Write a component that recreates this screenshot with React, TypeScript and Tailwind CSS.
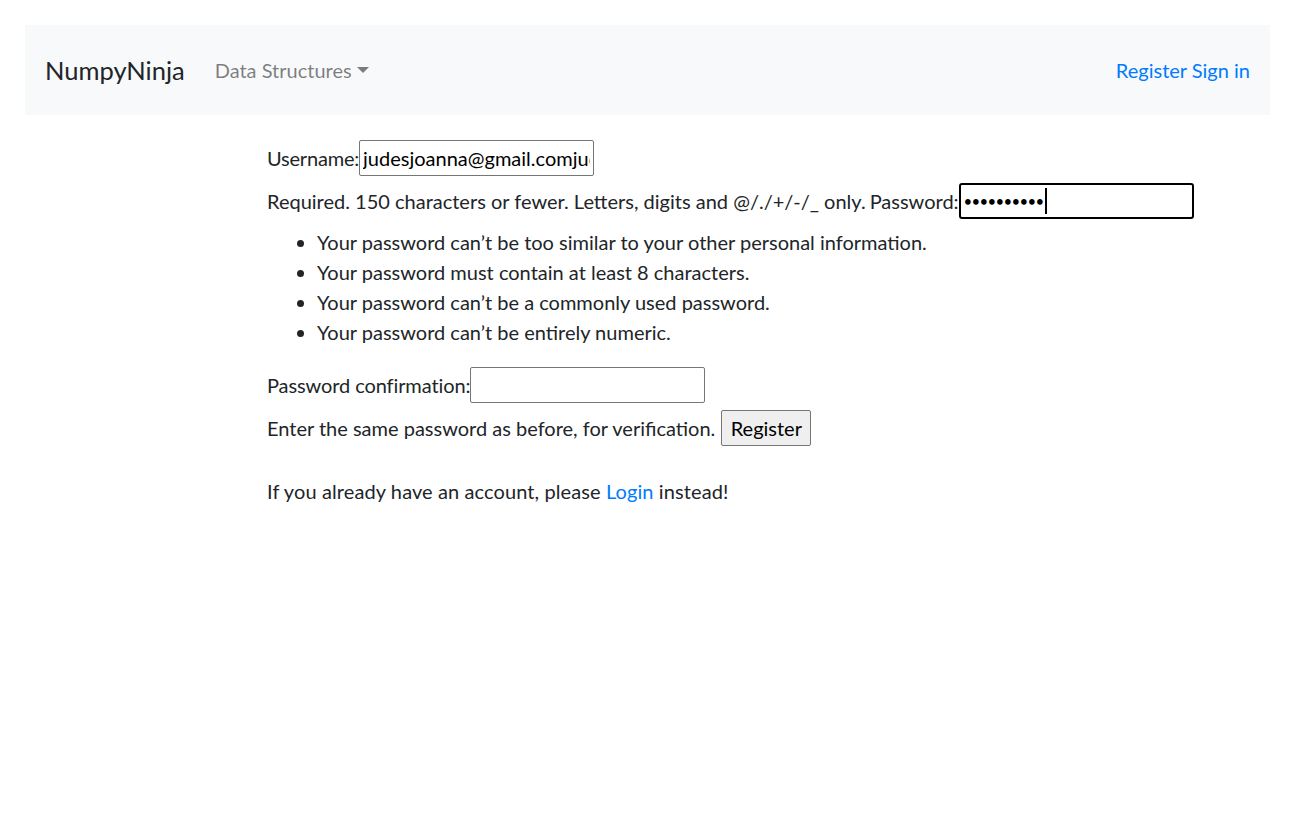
import React from 'react';

const PASSWORD_RULES = [
  'Your password can’t be too similar to your other personal information.',
  'Your password must contain at least 8 characters.',
  'Your password can’t be a commonly used password.',
  'Your password can’t be entirely numeric.',
];

function Navbar() {
  return (
    <nav className="flex h-[90px] items-center justify-between bg-[#f8f9fa] px-5">
      <div className="flex items-center">
        <a href="#" className="text-[25.5px] leading-[38px] text-[#212529]">
          NumpyNinja
        </a>
        <button className="ml-[30px] flex items-center text-[20px] leading-[30px] text-black/50">
          Data Structures
          <span className="ml-[5px] h-0 w-0 border-x-[6px] border-t-[6px] border-x-transparent border-t-current" />
        </button>
      </div>
      <div className="text-[20px] leading-[30px] text-[#007bff]">
        <a href="#">Register</a> <a href="#">Sign in</a>
      </div>
    </nav>
  );
}

function TextInput({value, type = 'text'}: {value?: string; type?: string}) {
  return (
    <input
      type={type}
      defaultValue={value}
      readOnly
      className="h-[36px] w-[235px] rounded-[2px] border border-[#767676] bg-white px-[3px] text-[20px] text-black outline-none"
    />
  );
}

export default function App() {
  return (
    <div className="min-h-screen bg-white px-[25px] pt-[25px] [font-family:Lato,sans-serif] text-[#212529]">
      <Navbar />

      <main className="pl-[242px] pt-[25px] text-[20px] leading-[30px]">
        <form onSubmit={(e) => e.preventDefault()}>
          <div className="flex h-[36px] items-center">
            <label className="tracking-[-0.2px]">Username:</label>
            <TextInput value="judesjoanna@gmail.comjudesjoanna@gmail.com" />
          </div>

          <div className="mt-[7px] flex h-[36px] items-center">
            <span>Required. 150 characters or fewer. Letters, digits and @/./+/-/_ only.</span>
            <label className="ml-[4px]">Password:</label>
            {/* focused password field */}
            <div className="flex h-[36px] w-[235px] items-center rounded-[3px] border-2 border-black bg-white pl-[3px] text-[15px] tracking-[-0.7px] text-black">
              <span>••••••••••</span>
              <span className="ml-[1px] h-[26px] w-[2px] bg-black" />
            </div>
          </div>

          <ul className="mt-[8px] list-disc pl-[50px]">
            {PASSWORD_RULES.map((rule) => (
              <li key={rule}>{rule}</li>
            ))}
          </ul>

          <div className="mt-[20px] flex h-[36px] items-center">
            <label className="tracking-[-0.1px]">Password confirmation:</label>
            <TextInput type="password" />
          </div>

          <div className="mt-[7px] flex h-[36px] items-center">
            <span>Enter the same password as before, for verification.</span>
            <button
              type="submit"
              className="ml-[6px] h-[36px] w-[90px] rounded-[2px] border border-[#767676] bg-[#efefef] text-black">
              Register
            </button>
          </div>
        </form>

        <p className="mt-[30px] tracking-[0.1px]">
          If you already have an account, please{' '}
          <a href="#" className="text-[#007bff]">
            Login
          </a>{' '}
          instead!
        </p>
      </main>
    </div>
  );
}
